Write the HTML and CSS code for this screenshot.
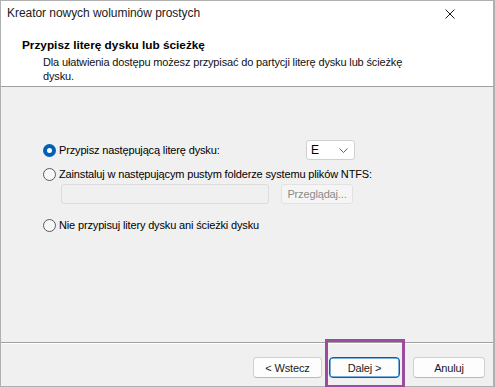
FILE: index.html
```html
<!DOCTYPE html>
<html lang="pl">
<head>
<meta charset="utf-8">
<link rel="stylesheet" href="styles.css">
</head>
<body>
<div class="window">
  <div class="top">
    <div class="titlebar">
      <span class="title">Kreator nowych woluminów prostych</span>
      <svg class="close" width="10" height="10" viewBox="0 0 10 10"><path d="M0.5 0.5L9.5 9.5M9.5 0.5L0.5 9.5" stroke="#1a1a1a" stroke-width="1"/></svg>
    </div>
    <div class="header">
      <div class="heading">Przypisz literę dysku lub ścieżkę</div>
      <div class="desc">Dla ułatwienia dostępu możesz przypisać do partycji literę dysku lub ścieżkę dysku.</div>
    </div>
  </div>
  <div class="body">
    <div class="row row1">
      <span class="radio checked"></span>
      <span class="label">Przypisz następującą literę dysku:</span>
      <span class="select"><span>E</span><svg width="9" height="5" viewBox="0 0 9 5"><path d="M0.5 0.5L4.5 4.5L8.5 0.5" fill="none" stroke="#606060" stroke-width="1"/></svg></span>
    </div>
    <div class="row row2">
      <span class="radio"></span>
      <span class="label">Zainstaluj w następującym pustym folderze systemu plików NTFS:</span>
    </div>
    <div class="row row-path">
      <span class="textbox"></span>
      <span class="browse">Przeglądaj...</span>
    </div>
    <div class="row row3">
      <span class="radio"></span>
      <span class="label">Nie przypisuj litery dysku ani ścieżki dysku</span>
    </div>
  </div>
  <div class="footer">
    <span class="btn back">&lt; Wstecz</span>
    <span class="btn next">Dalej &gt;<span class="highlight"></span></span>
    <span class="btn cancel">Anuluj</span>
  </div>
</div>
</body>
</html>
```

FILE: styles.css
```css
* { box-sizing: border-box; }
html, body { margin: 0; padding: 0; }
body {
  width: 495px;
  height: 387px;
  font-family: "Liberation Sans", Arial, sans-serif;
  font-size: 11px;
  letter-spacing: -0.15px;
  color: #000;
  background: #fff;
}
.window {
  width: 495px;
  height: 387px;
  border: 1px solid #b0b0b0;
  border-right-width: 2px;
  display: flex;
  flex-direction: column;
  background: #f0f0f0;
}
.top {
  background: #fff;
  height: 86px;
  border-bottom: 1px solid #a0a0a0;
  flex: none;
}
.titlebar {
  height: 30px;
  display: flex;
  align-items: flex-start;
  justify-content: space-between;
  padding: 5px 0 0 6px;
}
.title { font-size: 12px; line-height: 15px; letter-spacing: -0.05px; color: #1a1a1a; }
.close { margin: 3px 38px 0 0; }
.header { padding: 6px 0 0 21px; }
.heading { font-weight: bold; font-size: 11.8px; line-height: 16px; letter-spacing: 0; }
.desc {
  margin: 2px 0 0 21px;
  width: 365px;
  line-height: 14px;
  color: #111;
}
.body {
  flex: 1;
  position: relative;
  padding: 53px 0 0 42px;
}
.row { display: flex; align-items: center; }
.row1 { height: 20px; }
.row2 { height: 18px; margin-top: 5px; }
.row-path { height: 20px; margin-top: 1px; padding-left: 18px; }
.row3 { height: 18px; margin-top: 12px; }
.radio {
  width: 13px;
  height: 13px;
  border-radius: 50%;
  border: 1px solid #5a5a5a;
  background: #f7f7f7;
  flex: none;
  margin-right: 3px;
}
.radio.checked {
  border: 4px solid #005fb8;
  background: #fff;
}
.label { white-space: nowrap; }
.select {
  margin-left: auto;
  margin-right: 138px;
  width: 49px;
  height: 20px;
  background: #fff;
  border: 1px solid #cfcfcf;
  border-radius: 3px;
  display: flex;
  align-items: center;
  justify-content: space-between;
  padding: 0 6px 0 4px;
  font-size: 12px;
}
.select svg { margin-top: 1px; }
.textbox {
  width: 208px;
  height: 20px;
  background: #f0f0f0;
  border: 1px solid #dcdcdc;
  border-radius: 3px;
}
.browse {
  margin-left: 12px;
  width: 72px;
  height: 20px;
  border: 1px solid #e2e2e2;
  border-radius: 3px;
  background: #f5f5f5;
  color: #8a8a8a;
  display: flex;
  align-items: center;
  justify-content: center;
}
.footer {
  height: 44px;
  flex: none;
  border-top: 1px solid #a0a0a0;
  box-shadow: inset 0 1px 0 #fff;
  display: flex;
  align-items: flex-start;
  padding: 14px 0 0 252px;
}
.btn {
  position: relative;
  height: 21px;
  background: #fdfdfd;
  border: 1px solid #d0d0d0;
  border-bottom-color: #b8b8b8;
  border-radius: 4px;
  display: flex;
  align-items: center;
  justify-content: center;
  color: #1a1a1a;
}
.back { width: 69px; }
.next {
  width: 71px;
  margin-left: 7px;
  border: 1px solid #005fb8;
  box-shadow: inset 0 0 0 0.5px #005fb8;
}
.cancel { width: 72px; margin-left: 13px; }
.highlight {
  position: absolute;
  left: -5px;
  top: -19px;
  width: 80px;
  height: 49px;
  border: 3px solid #9b4c9f;
}
```
